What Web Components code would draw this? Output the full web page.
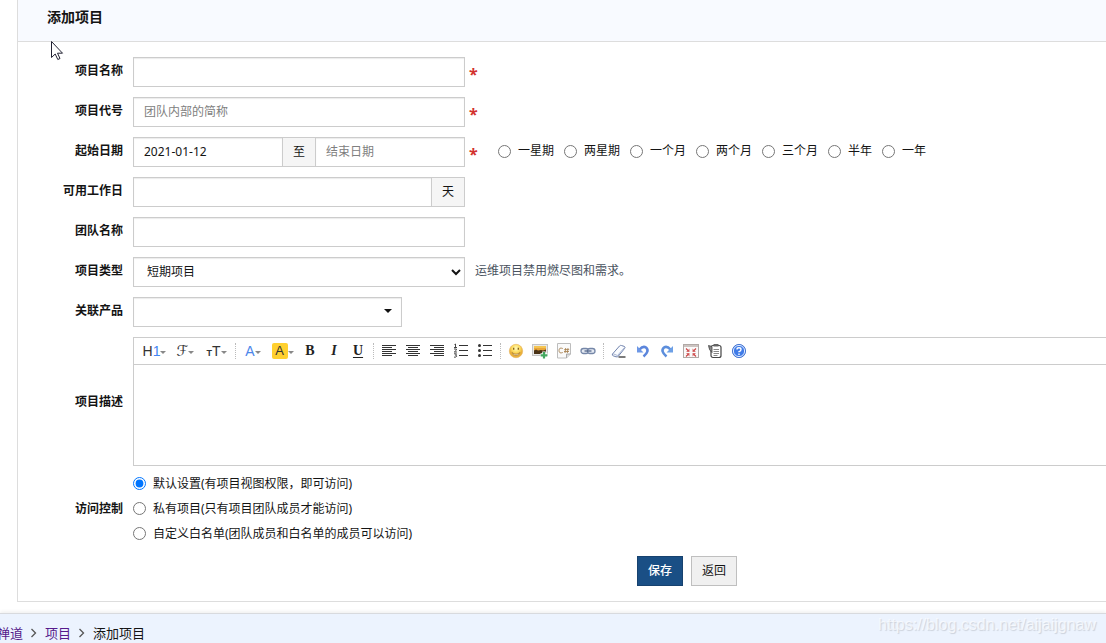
<!DOCTYPE html>
<html lang="zh-CN">
<head>
<meta charset="utf-8">
<title>添加项目</title>
<style>
  body { margin: 0; background: #fff; overflow-x: hidden; }
</style>
</head>
<body>
<project-page></project-page>
<script>
const BASE = `
  *, *::before, *::after { box-sizing: border-box; }
  :host { display: block; }
  .row { display: grid; grid-template-columns: 105px minmax(0, 1fr); column-gap: 10px; padding: 5px 0; }
  .caption { font-weight: 700; text-align: right; line-height: 28px; }
  .middle { align-items: center; }
  .line { display: flex; align-items: flex-start; }
  .group { display: flex; width: 332px; }
  input[type=text], select {
    flex: 1; min-width: 0; width: 100%; height: 30px; margin: 0; padding: 0 10px 2px; border: 1px solid #ccc; border-radius: 0;
    background: #fff; color: #141414; font: inherit; outline: 0; box-shadow: inset 0 1px 1px rgba(0,0,0,.08);
  }
  input::placeholder { color: #808080; opacity: 1; }
  input[type=radio] { width: 13px; height: 13px; margin: 0; }
  .addon { width: 34px; height: 30px; margin: 0 -1px; line-height: 28px; text-align: center; background: #f5f5f5; border: 1px solid #ccc; z-index: 1; }
  .addon.last { margin-right: 0; }
  .star { width: 9px; margin-left: 4px; color: #d2322d; font-size: 16px; font-weight: 700; line-height: 34px; height: 30px; }
`;
const star = '<span class="star" aria-hidden="true">*</span>';

class BaseElement extends HTMLElement {
  connectedCallback() {
    if (this.shadowRoot) return;
    const t = document.createElement('template');
    t.innerHTML = `<style>${BASE}${this.styles()}</style>${this.markup()}`;
    this.attachShadow({ mode: 'open' }).append(t.content.cloneNode(true));
  }
  styles() { return ''; }
  attr(n) { return this.getAttribute(n) || ''; }
}

customElements.define('text-field', class extends BaseElement {
  markup() {
    const unit = this.attr('unit');
    return `<div class="row"><label class="caption" for="f">${this.attr('label')}</label>
      <div class="line"><div class="group"><input type="text" id="f" placeholder="${this.attr('placeholder')}">${unit ? `<span class="addon last">${unit}</span>` : ''}</div>${this.hasAttribute('required') ? star : ''}</div></div>`;
  }
});

customElements.define('date-range-field', class extends BaseElement {
  styles() {
    return `.spans { display: flex; gap: 10px; margin-left: 20px; }
      .spans label { display: flex; align-items: center; gap: 7px; line-height: 28px; white-space: nowrap; }`;
  }
  markup() {
    const spans = ['一星期', '两星期', '一个月', '两个月', '三个月', '半年', '一年'];
    return `<div class="row"><label class="caption" for="from">起始日期</label>
      <div class="line"><div class="group"><input type="text" id="from" value="2021-01-12"><span class="addon">至</span><input type="text" placeholder="结束日期" aria-label="结束日期"></div>${star}
      <div class="spans">${spans.map(s => `<label><input type="radio" name="span">${s}</label>`).join('')}</div></div></div>`;
  }
});

customElements.define('select-field', class extends BaseElement {
  styles() {
    return `select { padding: 0 0 2px 9px; }
      .note { margin-left: 10px; line-height: 28px; color: #4a5360; }
      .compact { width: 269px; display: grid; align-items: center; }
      .compact select { appearance: none; grid-area: 1 / 1; }
      .compact svg { grid-area: 1 / 1; justify-self: end; margin-right: 10px; pointer-events: none; }`;
  }
  markup() {
    const compact = this.hasAttribute('compact');
    return `<div class="row"><label class="caption" for="f">${this.attr('label')}</label>
      <div class="line"><div class="group ${compact ? 'compact' : ''}"><select id="f"><option>${this.attr('value')}</option></select>
      ${compact ? '<svg width="8" height="6" viewBox="0 0 8 6"><path d="M0 0h8L4 4z" fill="#111"/></svg>' : ''}</div>
      <span class="note"><slot></slot></span></div></div>`;
  }
});

const ICONS = {
  left: '<path d="M1 2.5h14M1 4.5h10M1 6.5h14M1 8.5h10M1 10.5h14M1 12.5h10" stroke="#333" stroke-width="1"/>',
  center: '<path d="M1 2.5h14M3 4.5h10M1 6.5h14M3 8.5h10M1 10.5h14M3 12.5h10" stroke="#333"/>',
  right: '<path d="M1 2.5h14M5 4.5h10M1 6.5h14M5 8.5h10M1 10.5h14M5 12.5h10" stroke="#333"/>',
  ol: '<path d="M6 2.5h9M6 7.5h9M6 12.5h9" stroke="#333"/><path d="M1.500 1.500l1-.5V4.500M1 4.500h3M1 6h2.300v1.200l-2 1.800h2.700M1 10.800h2.500L2.500 12.300q1.300 0 1.200 1T1 14.200" fill="none" stroke="#333" stroke-width=".9"/>',
  ul: '<path d="M6 2.5h9M6 7.5h9M6 12.5h9" stroke="#333"/><circle cx="2.500" cy="2.500" r="1.500" fill="#333"/><circle cx="2.500" cy="7.500" r="1.500" fill="#333"/><circle cx="2.500" cy="12.500" r="1.500" fill="#333"/>',
  smile: '<defs><radialGradient id="s" cy=".3"><stop offset="0" stop-color="#fffab8"/><stop offset=".6" stop-color="#fcdc60"/><stop offset="1" stop-color="#eab03a"/></radialGradient></defs><circle cx="8" cy="8" r="6.700" fill="url(#s)" stroke="#e5b25a" stroke-width=".6"/><path d="M5.700 4.800v2M10.300 4.800v2" stroke="#7a5518" stroke-width="1.200"/><path d="M4 9.500q4 3.500 8 0-1 3-4 3t-4-3" fill="#fff" stroke="#a9771d" stroke-width=".7"/>',
  image: '<rect x=".5" y="1.500" width="15" height="11" fill="#e9e9e9" stroke="#c4c4c4"/><path d="M2 3h12v8H2z" fill="#e9a63a"/><path d="M2 3h12v2H2z" fill="#f4c552"/><path d="M2 7.500l2-1 2 1 3-.5 2 .5 3-1v4.500H2z" fill="#4a3317"/><path d="M12 8.500v7M8.500 12h7" stroke="#fff" stroke-width="3.500"/><path d="M12 9v6.500M8.700 12.300h6.600" stroke="#43a860" stroke-width="2.200"/>',
  code: '<path d="M1.500 .5h13v10.500l-4 4h-9z" fill="#fafafa" stroke="#bdbdbd"/><path d="M14.500 11h-4v4" fill="#ddd" stroke="#aaa"/><path d="M6.800 5.500Q3 4 3 7.500T6.800 9.500M9.700 5l-.7 5M12 5l-.7 5M8.200 6.600h5M8 8.500h5" fill="none" stroke="#a98455" stroke-width=".9"/>',
  link: '<rect x="1" y="5.500" width="7.500" height="5" rx="2.500" fill="#e4e9f2" stroke="#7587a8" stroke-width="1.300"/><rect x="7.500" y="5.500" width="7.500" height="5" rx="2.500" fill="#e4e9f2" stroke="#7587a8" stroke-width="1.300"/><path d="M4.500 8h7" stroke="#52668a" stroke-width="1.300"/>',
  eraser: '<path d="M1.500 11l7-8q1-1 2-.5l3 1q1 .5.2 1.800L7.500 13q-1 1.200-2.500.8l-2.800-1q-1.500-.5-.7-1.800z" fill="#fafcff" stroke="#7183ad"/><path d="M1.500 10.500l5 2 7-8" fill="none" stroke="#a9b6d2"/><path d="M7.500 14h7" stroke="#222" stroke-width="1.200"/>',
  undo: '<path d="M4.500 6.500q3.500-4 6.500-2Q15 8 8.500 13.500" fill="none" stroke="#5c86dc" stroke-width="2.600"/><path d="M2 3v6.500h6.500z" fill="#6d97e6"/>',
  redo: '<path d="M11.500 6.500Q8 2.500 5 4.500 1 8 7.500 13.500" fill="none" stroke="#5c8edc" stroke-width="2.600"/><path d="M14 3v6.500H7.500z" fill="#6da0e6"/>',
  full: '<rect x=".5" y="1.500" width="15" height="13" fill="#fafafa" stroke="#b1a9a6"/><path d="M1 2h14v2H1z" fill="#ccc4c1"/><path d="M3 5.500l2.500 2.500M13 5.500L10.500 8M3 13.500l2.500-2.500M13 13.500l-2.500-2.500" stroke="#cc4444" stroke-width="1.100" fill="none"/><path d="M6.500 5.500V9H3zM9.500 5.500V9H13zM6.500 13.500V10H3zM9.500 13.500V10H13z" fill="#cc4444" opacity=".75"/>',
  clip: '<rect x="4" y="2.500" width="10" height="12" rx="2" fill="#fff" stroke="#454545" stroke-width="1.200"/><path d="M6.500 1h5v2.500h-5z" fill="#666"/><path d="M6.500 6.500h5.500M6.500 8.500h5.500M6.500 10.500h5.500M6.500 12.500h4" stroke="#888"/><path d="M1.500 2.500l3.500 1v6q-3-2-3.500-7" fill="#888" stroke="#444" stroke-width=".8"/>',
  help: '<circle cx="8" cy="8" r="6.600" fill="#3f7be8" stroke="#4b78d0"/><circle cx="8" cy="8" r="5.600" fill="none" stroke="#dce9ff"/><path d="M6 6.500Q6 4.800 8 4.800T10 6.400 8 8.700v.6M8 10.500v1.400" fill="none" stroke="#fff" stroke-width="1.400"/>'
};
const svg = n => `<svg width="16" height="16" viewBox="0 0 16 16" fill="none">${ICONS[n]}</svg>`;

customElements.define('editor-field', class extends BaseElement {
  styles() {
    return `.editor { border: 1px solid #ccc; border-right: 0; height: 129px; display: flex; flex-direction: column; }
      .bar { display: flex; align-items: center; height: 27px; padding-left: 5px; border-bottom: 1px solid #ccc; overflow: hidden; }
      textarea { flex: 1; border: 0; padding: 8px; resize: none; outline: 0; font: inherit; }
      button { flex: none; display: flex; align-items: center; justify-content: center; width: 24px; height: 24px; padding: 0; border: 0; background: none; color: #333; font: 14px/20px "Liberation Sans", sans-serif; }
      .menu { width: 31px; }
      .menu::after { content: ""; border: 3px solid transparent; border-top-color: #888; border-bottom: 0; margin-top: 2px; }
      .blue { color: #4285f4; }
      .script { font-family: "DejaVu Sans", sans-serif; font-size: 15px; }
      small { font-size: 9px; font-weight: 700; padding-top: 3px; }
      .color { width: 28px; color: #4c86ea; }
      .mark { width: 31px; }
      .mark span { width: 16px; line-height: 16px; border-radius: 2px; background: #ffd02f; font-size: 13px; }
      .serif { font: 700 14px/18px "Liberation Serif", serif; color: #222; padding-bottom: 1px; }
      .serif u { text-underline-offset: 2px; }
      .sep { flex: none; height: 16px; margin: 0 3px; border-left: 1px dotted #bbb; }
      svg { display: block; }`;
  }
  markup() {
    const b = (n, t) => `<button type="button" title="${t}" aria-label="${t}">${svg(n)}</button>`;
    const sep = '<span class="sep"></span>';
    return `<div class="row middle"><label class="caption" for="f">项目描述</label><div class="editor"><div class="bar">
      <button type="button" class="menu" title="段落"><span>H<span class="blue">1</span></span></button>
      <button type="button" class="menu" title="字体"><span class="script">ℱ</span></button>
      <button type="button" class="menu" title="文字大小"><small>T</small><span>T</span></button>${sep}
      <button type="button" class="menu color" title="文字颜色"><span>A</span></button>
      <button type="button" class="menu mark" title="文字背景"><span>A</span></button>
      <button type="button" class="serif" title="粗体">B</button>
      <button type="button" class="serif" title="斜体"><i>I</i></button>
      <button type="button" class="serif" title="下划线"><u>U</u></button>${sep}
      ${b('left', '左对齐')}${b('center', '居中')}${b('right', '右对齐')}${b('ol', '编号')}${b('ul', '项目符号')}${sep}
      ${b('smile', '插入表情')}${b('image', '图片')}${b('code', '插入程序代码')}${b('link', '超级链接')}${sep}
      ${b('eraser', '删除格式')}${b('undo', '后退')}${b('redo', '前进')}${b('full', '全屏显示')}${b('clip', '模板')}${b('help', '帮助')}
      </div><textarea id="f"></textarea></div></div>`;
  }
});

customElements.define('access-field', class extends BaseElement {
  styles() {
    return `.row { padding: 0; } .list label { display: flex; align-items: center; gap: 7px; height: 25px; }`;
  }
  markup() {
    const items = ['默认设置(有项目视图权限，即可访问)', '私有项目(只有项目团队成员才能访问)', '自定义白名单(团队成员和白名单的成员可以访问)'];
    return `<div class="row middle" role="radiogroup" aria-labelledby="c"><span class="caption" id="c">访问控制</span>
      <div class="list">${items.map((s, i) => `<label><input type="radio" name="acl"${i ? '' : ' checked'}>${s}</label>`).join('')}</div></div>`;
  }
});

customElements.define('form-actions', class extends BaseElement {
  styles() {
    return `div { display: flex; justify-content: center; gap: 8px; padding: 10px 0 15px 250px; }
      button { width: 46px; height: 30px; padding: 0; font: inherit; color: #141414; background: #f0f0f0; border: 1px solid #bfbfbf; }
      .primary { color: #fff; font-weight: 500; background: #1a4f85; border-color: #17426f; }`;
  }
  markup() { return '<div><button type="submit" class="primary">保存</button><button type="button">返回</button></div>'; }
});

customElements.define('form-panel', class extends BaseElement {
  styles() {
    return `:host { margin-left: 17px; border-left: 1px solid #ddd; border-bottom: 1px solid #ddd; }
      h1 { margin: 0; height: 42px; padding: 0 29px; font-size: 14px; line-height: 34px; font-weight: 700; background: #f8faff; border-bottom: 1px solid #ddd; }
      form { padding-top: 10px; }`;
  }
  markup() { return `<h1>${this.attr('heading')}</h1><form><slot></slot></form>`; }
});

customElements.define('crumb-bar', class extends BaseElement {
  styles() {
    return `:host { margin-top: 11px; border-top: 1px solid #d8dade; background: #ecf3fe; box-shadow: 0 -1px 4px rgba(0,0,0,.08); }
      nav { display: flex; align-items: center; height: 38px; margin-left: -3px; font-size: 13px; line-height: 20px; }
      a { color: #551a8b; text-decoration: none; }
      svg { margin: 0 8px; }`;
  }
  markup() {
    const sep = '<svg width="6" height="10" viewBox="0 0 6 10"><path d="M.5 1l4 4-4 4" fill="none" stroke="#555" stroke-width="1.300"/></svg>';
    return `<nav><a href="#home">禅道</a>${sep}<a href="#project">项目</a>${sep}<span>添加项目</span></nav>`;
  }
});

customElements.define('project-page', class extends BaseElement {
  styles() {
    return `:host { position: relative; overflow: hidden; color: #141414; font: 12px/20px "Noto Sans", "Noto Sans CJK SC", sans-serif; max-height: 100vh; }
      .pointer { position: absolute; left: 51px; top: 41px; }
      .watermark { position: absolute; right: 10px; bottom: 8px; font: 16px/20px "Liberation Sans", sans-serif; color: rgba(255,255,255,.65); text-shadow: 1px 1px 1px rgba(0,0,0,.14); }`;
  }
  markup() {
    return `<form-panel heading="添加项目">
        <text-field label="项目名称" required></text-field>
        <text-field label="项目代号" placeholder="团队内部的简称" required></text-field>
        <date-range-field></date-range-field>
        <text-field label="可用工作日" unit="天"></text-field>
        <text-field label="团队名称"></text-field>
        <select-field label="项目类型" value="短期项目">运维项目禁用燃尽图和需求。</select-field>
        <select-field label="关联产品" compact></select-field>
        <editor-field></editor-field>
        <access-field></access-field>
        <form-actions></form-actions>
      </form-panel>
      <crumb-bar></crumb-bar>
      <svg class="pointer" width="13" height="20" viewBox="0 0 13 20"><path d="M.5 .5v16l3.700-3.500 2.600 5.500 2.200-1-2.500-5.300h5z" fill="#fff" stroke="#223"/></svg>
      <span class="watermark">https://blog.csdn.net/aijaijgnaw</span>`;
  }
});
</script>
</body>
</html>
